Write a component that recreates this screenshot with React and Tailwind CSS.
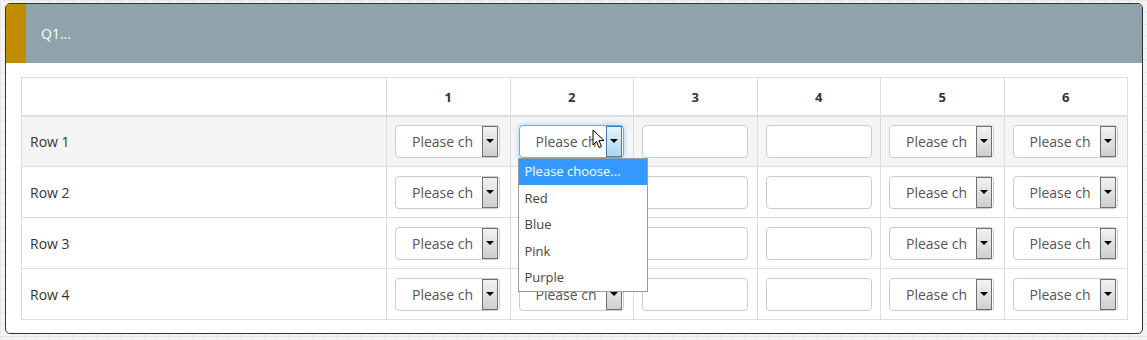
const rows = ["Row 1", "Row 2", "Row 3", "Row 4"];
const cols = ["select", "select", "text", "text", "select", "select"];

function Arrow({ focused }) {
  return (
    <div
      className={
        "absolute right-[1px] top-0 bottom-0 w-[16px] flex items-center justify-center border " +
        (focused
          ? "border-[#3c7fb1] bg-[linear-gradient(#e5f4fc,#a7d8f5)]"
          : "border-[#707070] bg-[linear-gradient(#f2f2f2,#cfcfcf)]")
      }
    >
      <div className="w-0 h-0 border-l-[4px] border-r-[4px] border-t-[4px] border-l-transparent border-r-transparent border-t-black" />
    </div>
  );
}

function Select({ focused }) {
  return (
    <div
      className={
        "relative h-[33px] w-[105px] rounded-[4px] border bg-white " +
        (focused ? "border-[#66afe9] shadow-[0_0_5px_rgba(102,175,233,0.6)]" : "border-[#ccc]")
      }
    >
      <div className="absolute left-[16px] top-0 bottom-0 w-[61px] overflow-hidden whitespace-nowrap flex items-center text-[14px] text-[#555]">
        Please choose...
      </div>
      <Arrow focused={focused} />
    </div>
  );
}

function Cursor() {
  return (
    <svg className="absolute left-[73px] top-[4px]" width="13" height="20" viewBox="0 0 13 20">
      <path d="M1 1 L1 16 L4.5 12.5 L7 18.5 L9.5 17.5 L7 11.5 L12 11.5 Z" fill="white" stroke="black" strokeWidth="1" strokeLinejoin="round" />
    </svg>
  );
}

function Dropdown() {
  const opts = ["Please choose...", "Red", "Blue", "Pink", "Purple"];
  return (
    <div className="absolute left-[-1px] top-[33px] w-[130px] border border-[#9a9a9a] bg-white z-10">
      {opts.map((o, i) => (
        <div
          key={o}
          className={
            "h-[26.5px] flex items-center px-[6px] text-[13px] " +
            (i === 0 ? "bg-[#3399ff] text-white" : "text-[#444]")
          }
        >
          {o}
        </div>
      ))}
    </div>
  );
}

export default function App() {
  return (
    <div
      className="w-[1147px] h-[340px] pt-[3px] pl-[5px] bg-[#f3f3f3] bg-[linear-gradient(#e8e8e8_1px,transparent_1px),linear-gradient(90deg,#e8e8e8_1px,transparent_1px)] bg-[size:12px_12px]"
      style={{ fontFamily: '"Open Sans", "Liberation Sans", sans-serif' }}
    >
      <div className="w-[1138px] h-[331px] rounded-[5px] border border-[#2f3333] bg-white overflow-hidden">
        <div className="h-[59px] flex bg-[#8fa3ac]">
          <div className="w-[20px] bg-[#c08c00]" />
          <div className="pl-[15px] flex items-center text-white text-[14px]">Q1...</div>
        </div>
        <div className="pt-[14px] pl-[15px]">
          <table className="table-fixed border-collapse w-[1107px] text-[14px] text-[#333]">
            <colgroup>
              <col className="w-[365px]" />
              {cols.map((c, i) => (
                <col key={i} />
              ))}
            </colgroup>
            <thead>
              <tr className="h-[38px]">
                <th className="border border-[#ddd] border-b-2" />
                {cols.map((c, i) => (
                  <th key={i} className="border border-[#ddd] border-b-2 text-[13px] font-bold text-center pt-[2px]">
                    {i + 1}
                  </th>
                ))}
              </tr>
            </thead>
            <tbody>
              {rows.map((r, ri) => (
                <tr key={r} className={"h-[51px] " + (ri === 0 ? "bg-[#f5f5f5]" : "")}>
                  <td className="border border-[#ddd] pl-[8px] text-[14px]">{r}</td>
                  {cols.map((c, ci) => {
                    const focused = ri === 0 && ci === 1;
                    return (
                      <td key={ci} className="border border-[#ddd] px-[8px] align-middle">
                        <div className="relative">
                          {c === "select" ? (
                            <Select focused={focused} />
                          ) : (
                            <div className="h-[33px] w-[106px] rounded-[4px] border border-[#ccc] bg-white" />
                          )}
                          {focused && <Cursor />}
                          {focused && <Dropdown />}
                        </div>
                      </td>
                    );
                  })}
                </tr>
              ))}
            </tbody>
          </table>
        </div>
      </div>
    </div>
  );
}
